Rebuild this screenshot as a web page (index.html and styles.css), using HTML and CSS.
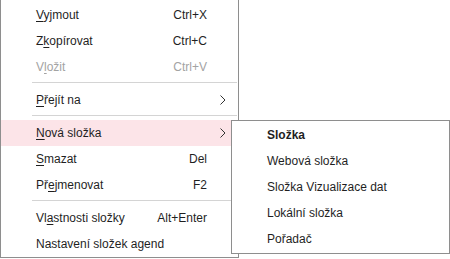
FILE: index.html
```html
<!DOCTYPE html>
<html lang="cs">
<head>
  <meta charset="UTF-8">
  <title>Kontextová nabídka</title>
  <link rel="stylesheet" href="styles.css">
</head>
<body>
<div class="menu">
  <div class="item"><span class="label"><u>V</u>yjmout</span><span class="key">Ctrl+X</span></div>
  <div class="item"><span class="label">Z<u>k</u>opírovat</span><span class="key">Ctrl+C</span></div>
  <div class="item disabled"><span class="label">V<u>l</u>ožit</span><span class="key">Ctrl+V</span></div>
  <div class="sep"></div>
  <div class="item"><span class="label"><u>P</u>řejít na</span>
    <svg class="arrow" width="6" height="10" viewBox="0 0 6 10"><polyline points="0.5,0.5 5,5 0.5,9.5" fill="none" stroke="#333" stroke-width="1"/></svg>
  </div>
  <div class="sep"></div>
  <div class="item active"><span class="label"><u>N</u>ová složka</span>
    <svg class="arrow" width="6" height="10" viewBox="0 0 6 10"><polyline points="0.5,0.5 5,5 0.5,9.5" fill="none" stroke="#333" stroke-width="1"/></svg>
    <div class="submenu">
      <div class="item bold">Složka</div>
      <div class="item">Webová složka</div>
      <div class="item">Složka Vizualizace dat</div>
      <div class="item">Lokální složka</div>
      <div class="item">Pořadač</div>
    </div>
  </div>
  <div class="item"><span class="label"><u>S</u>mazat</span><span class="key">Del</span></div>
  <div class="item"><span class="label">Př<u>e</u>jmenovat</span><span class="key">F2</span></div>
  <div class="sep"></div>
  <div class="item"><span class="label">Vl<u>a</u>stnosti složky</span><span class="key">Alt+Enter</span></div>
  <div class="item"><span class="label">Nastavení složek agend</span></div>
</div>
</body>
</html>
```

FILE: styles.css
```css
body {
  margin: 0;
  background: #fff;
  font-family: "Liberation Sans", Arial, sans-serif;
  font-size: 12px;
  color: #1f1f1f;
}
.menu {
  width: 237px;
  margin-top: -1px;
  padding: 2px 0 0;
  border: 1px solid #8e8e8e;
  background: #fff;
}
.item {
  position: relative;
  display: flex;
  align-items: center;
  height: 26px;
  padding: 0 12px 0 35px;
}
.label {
  flex: 1;
  white-space: nowrap;
}
.key {
  margin-right: 19px;
}
.arrow {
  display: block;
}
.item u {
  text-underline-offset: 2px;
}
.disabled {
  color: #a3a3a3;
}
.active {
  background: #fce4e8;
}
.sep {
  height: 1px;
  margin: 2px 1px 4px 31px;
  background: #d4d4d4;
}
.submenu {
  position: absolute;
  top: 0;
  left: 230px;
  width: 217px;
  padding: 1px 0;
  border: 1px solid #8e8e8e;
  background: #fff;
  color: #1f1f1f;
}
.submenu .item {
  padding-left: 35px;
}
.bold {
  font-weight: bold;
}
```
